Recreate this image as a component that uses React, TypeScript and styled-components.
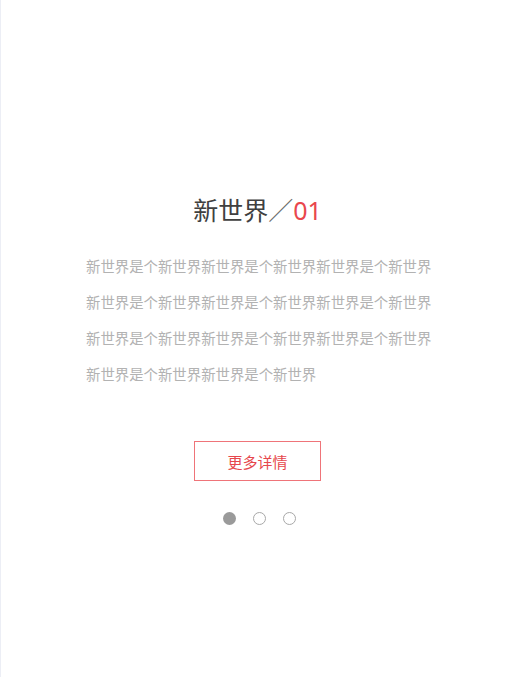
import React from "react";
import styled, { createGlobalStyle } from "styled-components";

const GlobalStyle = createGlobalStyle`
  html, body {
    margin: 0;
    padding: 0;
    background: #ffffff;
  }
  body {
    font-family: "Noto Sans CJK SC", "Noto Sans", sans-serif;
  }
`;

const Page = styled.main`
  width: 514px;
  min-height: 677px;
  box-sizing: border-box;
  padding-top: 191px;
  display: flex;
  flex-direction: column;
  align-items: center;
  border-left: 1px solid #eceef5;
`;

const Title = styled.h1`
  margin: 0;
  font-size: 25px;
  line-height: 36px;
  font-weight: 400;
  color: #404040;
  letter-spacing: 0;
`;

const Slash = styled.span`
  color: #6a6a6a;
`;

const Number = styled.span`
  color: #e9474d;
  font-family: "Noto Sans", "Open Sans", sans-serif;
`;

const Paragraph = styled.p`
  margin: 20px 0 0;
  align-self: flex-start;
  margin-left: 85px;
  width: 348px;
  font-size: 14.4px;
  line-height: 36px;
  color: #b2b2b2;
  text-align: left;
`;

const MoreButton = styled.button`
  margin-top: 49px;
  width: 127px;
  height: 40px;
  box-sizing: border-box;
  border: 1px solid #ef7479;
  background: #fff;
  color: #e6474d;
  font-family: "Noto Sans CJK SC", sans-serif;
  font-size: 15px;
  cursor: pointer;
  padding: 0;
`;

const Dots = styled.div`
  margin-top: 31px;
  display: flex;
  gap: 17px;
  margin-left: 4px;
`;

const Dot = styled.span<{ $active?: boolean }>`
  width: 13px;
  height: 13px;
  box-sizing: border-box;
  border-radius: 50%;
  background: ${(p) => (p.$active ? "#9a9a9a" : "#fff")};
  border: ${(p) => (p.$active ? "none" : "1.5px solid #a8a8a8")};
`;

const text = "新世界是个新世界".repeat(11);

export default function App() {
  return (
    <>
      <GlobalStyle />
      <Page>
        <Title>
          新世界<Slash>／</Slash>
          <Number>01</Number>
        </Title>
        <Paragraph>{text}</Paragraph>
        <MoreButton>更多详情</MoreButton>
        <Dots>
          <Dot $active />
          <Dot />
          <Dot />
        </Dots>
      </Page>
    </>
  );
}
